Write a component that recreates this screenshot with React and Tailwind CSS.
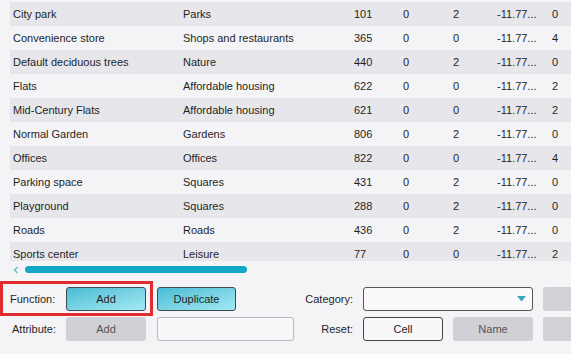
import React from "react";

const rows = [
  ["City park", "Parks", "101", "0", "2", "0"],
  ["Convenience store", "Shops and restaurants", "365", "0", "0", "4"],
  ["Default deciduous trees", "Nature", "440", "0", "2", "0"],
  ["Flats", "Affordable housing", "622", "0", "0", "2"],
  ["Mid-Century Flats", "Affordable housing", "621", "0", "0", "2"],
  ["Normal Garden", "Gardens", "806", "0", "2", "0"],
  ["Offices", "Offices", "822", "0", "0", "4"],
  ["Parking space", "Squares", "431", "0", "2", "0"],
  ["Playground", "Squares", "288", "0", "2", "0"],
  ["Roads", "Roads", "436", "0", "2", "0"],
  ["Sports center", "Leisure", "77", "0", "0", "2"],
];

export default function App() {
  return (
    <div
      className="relative w-[571px] h-[354px] overflow-hidden bg-[#f4f4f7] text-[11px] text-[#1f1f1f]"
      style={{ fontFamily: '"Liberation Sans", Arial, sans-serif' }}
    >
      <div className="h-[261px] overflow-hidden pt-[2px] pl-[10px]">
        {rows.map((r, i) => (
          <div
            key={i}
            className={`flex h-[24px] items-center whitespace-nowrap ${i % 2 === 0 ? "bg-[#e7e7eb]" : ""}`}
          >
            <div className="w-[170px] shrink-0 pl-[3px]">{r[0]}</div>
            <div className="w-[171px] shrink-0 pl-[3px]">{r[1]}</div>
            <div className="w-[49px] shrink-0 pl-[3px]">{r[2]}</div>
            <div className="w-[50px] shrink-0 pl-[3px]">{r[3]}</div>
            <div className="w-[44px] shrink-0 pl-[3px]">{r[4]}</div>
            <div className="w-[56px] shrink-0 pl-[3px]">-11.77...</div>
            <div className="shrink-0 pl-[2px]">{r[5]}</div>
          </div>
        ))}
      </div>

      <div className="flex h-[16px] items-center pl-[13px]">
        <svg width="6" height="8" viewBox="0 0 6 8" className="mt-[1px] shrink-0">
          <path d="M4.5 1 L1.5 4 L4.5 7" fill="none" stroke="#5fb6cf" strokeWidth="1.2" />
        </svg>
        <div className="ml-[6px] h-[7px] w-[222px] shrink-0 rounded-full bg-[#12a7c7]" />
      </div>

      <div className="pt-[10px]">
        <div className="flex h-[24px] items-center whitespace-nowrap">
          <div className="w-[66px] shrink-0 pl-[10px]">Function:</div>
          <button className="h-[24px] w-[80px] shrink-0 rounded-[3px] border border-[#3e4c52] bg-gradient-to-br from-[#45bdd4] to-[#a3e9f3] text-[11px] text-[#1f1f1f]">
            Add
          </button>
          <button className="ml-[11px] h-[24px] w-[79px] shrink-0 rounded-[3px] border border-[#3e4c52] bg-gradient-to-br from-[#45bdd4] to-[#a3e9f3] text-[11px] text-[#1f1f1f]">
            Duplicate
          </button>
          <div className="w-[117px] shrink-0 text-right">Category:</div>
          <div className="ml-[10px] flex h-[24px] w-[170px] shrink-0 items-center justify-end rounded-[3px] border border-[#555] bg-[#fafafc] pr-[6px]">
            <svg width="9" height="6" viewBox="0 0 9 6">
              <path d="M0 0 L9 0 L4.5 5.5 Z" fill="#3aa8c2" />
            </svg>
          </div>
          <div className="ml-[10px] h-[24px] w-[80px] shrink-0 rounded-[3px] bg-[#d2d2d6]" />
        </div>

        <div className="mt-[6px] flex h-[24px] items-center whitespace-nowrap">
          <div className="w-[66px] shrink-0 pl-[12px]">Attribute:</div>
          <button className="h-[24px] w-[80px] shrink-0 rounded-[3px] bg-[#d0d0d5] text-[11px] text-[#555]">
            Add
          </button>
          <div className="ml-[11px] h-[24px] w-[137px] shrink-0 rounded-[3px] border border-[#b9b9be] bg-[#f8f8fa]" />
          <div className="w-[59px] shrink-0 text-right">Reset:</div>
          <button className="ml-[10px] h-[24px] w-[80px] shrink-0 rounded-[3px] border border-[#444] bg-[#f8f8fa] text-[11px] text-[#1f1f1f]">
            Cell
          </button>
          <button className="ml-[10px] h-[24px] w-[80px] shrink-0 rounded-[3px] bg-[#d0d0d5] text-[11px] text-[#555]">
            Name
          </button>
          <div className="ml-[10px] h-[24px] w-[80px] shrink-0 rounded-[3px] bg-[#d2d2d6]" />
        </div>
      </div>

      <div className="pointer-events-none absolute left-[0px] top-[281px] h-[35px] w-[153px] border-[3px] border-[#e02b2f]" />
    </div>
  );
}
